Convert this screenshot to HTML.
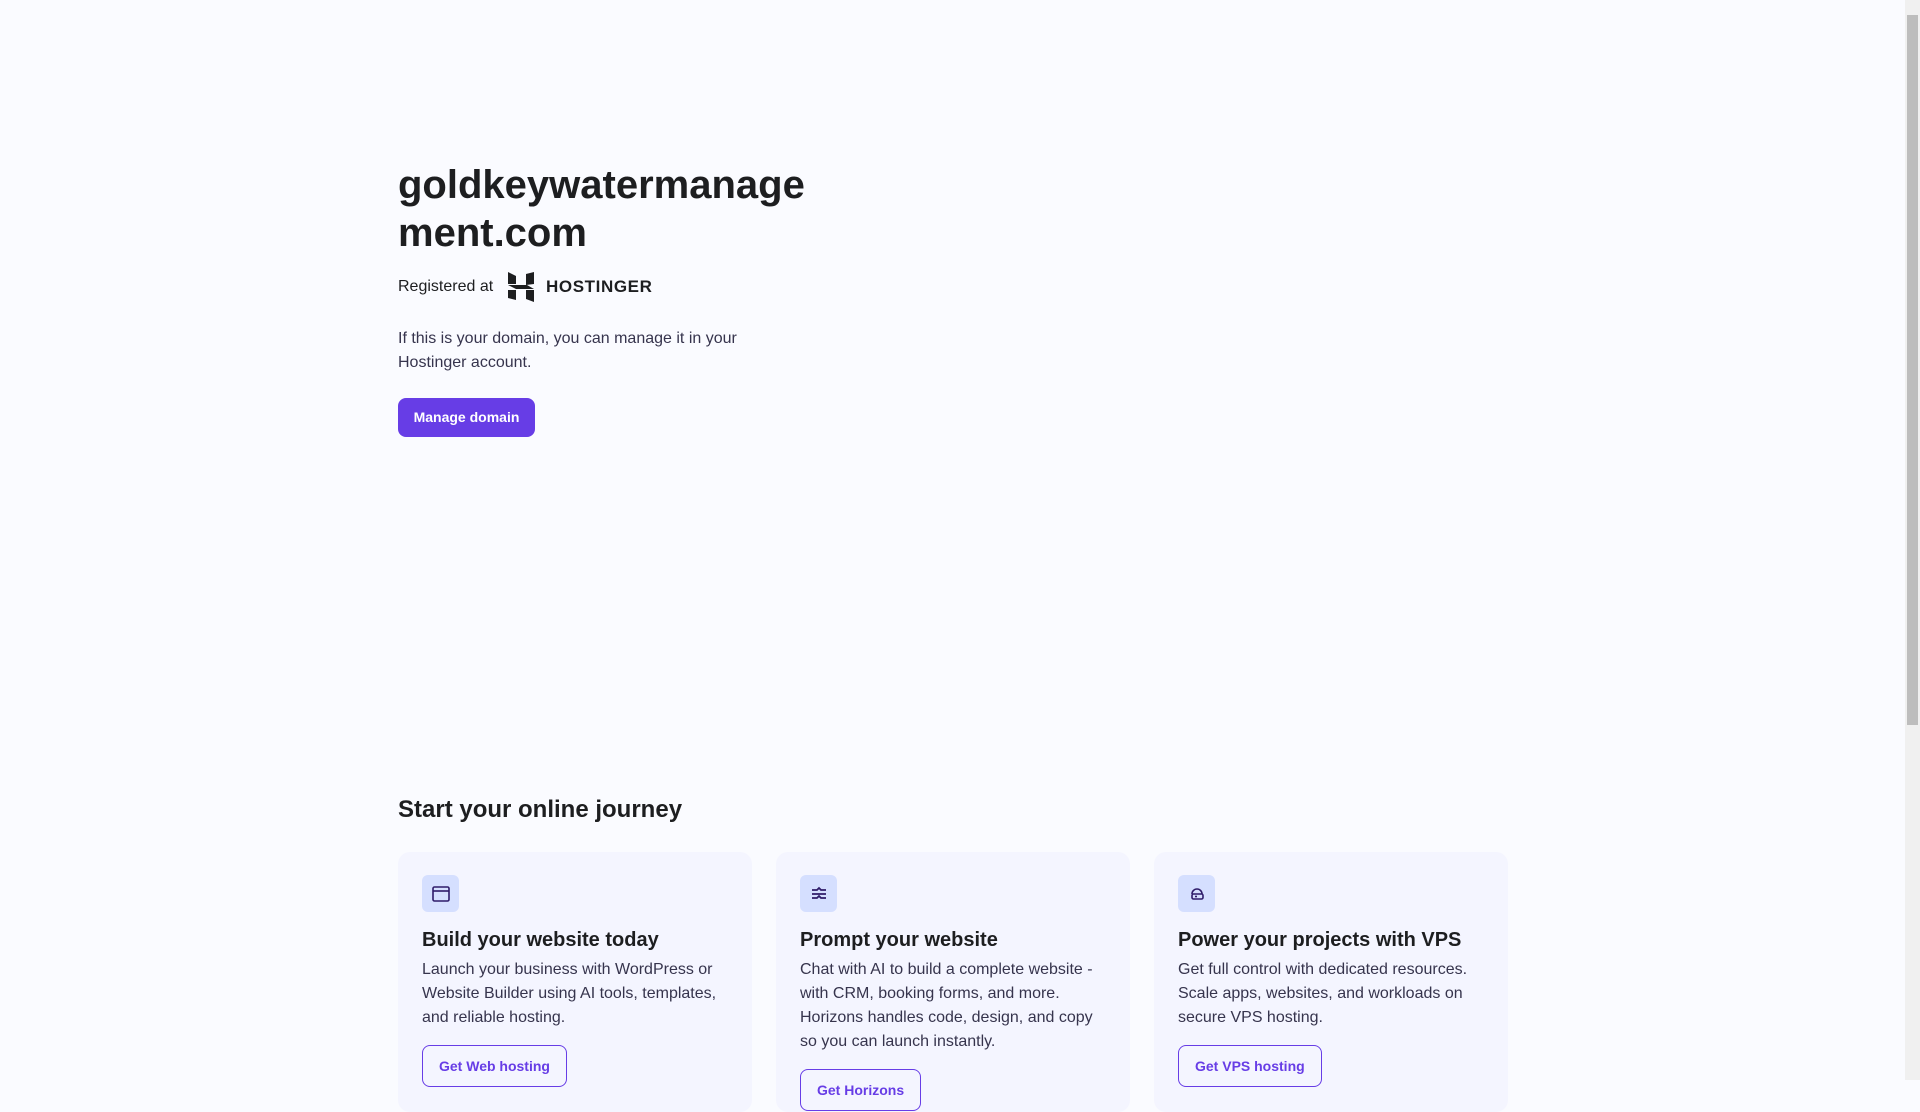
<!DOCTYPE html>
<html><head><meta charset="utf-8"><style>
html,body{margin:0;padding:0}
body{width:1920px;height:1080px;overflow:hidden;background:#fafbff;font-family:"Liberation Sans",sans-serif;color:#1d1e20;position:relative}
.sb{position:absolute;right:0;top:0;width:15px;height:1080px;background:#f0f0f0}
.sb::after{content:"";position:absolute;left:2px;right:2px;top:15px;height:710px;background:#bdbdbd}
h1{position:absolute;left:398px;top:161px;margin:0;font-size:40px;line-height:48px;font-weight:700;width:440px;word-break:break-all}
.reg{position:absolute;left:398px;top:275px;font-size:16px;line-height:24px;display:flex;align-items:center}
.logo{position:absolute;left:508px;top:272px;display:flex;align-items:center}
.logo span{font-weight:700;font-size:17px;letter-spacing:0.6px;margin-left:11px;color:#1d1e20}
.p{position:absolute;left:398px;top:327px;font-size:16px;line-height:24px;width:380px;color:#36344d}
.btn{position:absolute;left:398px;top:398px;width:137px;height:39px;background:#673de6;border-radius:8px;color:#fff;font-weight:700;font-size:14px;line-height:39px;text-align:center}
h2{position:absolute;left:398px;top:795px;margin:0;font-size:24px;line-height:30px;font-weight:700}
.card{position:absolute;top:852px;width:354px;height:260px;background:#f4f5ff;border-radius:12px}
.ic{position:absolute;left:24px;top:23px;width:37px;height:37px;background:#d5dfff;border-radius:6px;display:flex;align-items:center;justify-content:center}
.card h3{position:absolute;left:24px;top:75px;margin:0;font-size:20px;line-height:26px;font-weight:700}
.card p{position:absolute;left:24px;top:106px;margin:0;font-size:16px;line-height:24px;width:310px;color:#36344d}
.ob{position:absolute;left:24px;height:40px;border:1px solid #673de6;border-radius:8px;color:#673de6;font-weight:700;font-size:14px;line-height:40px;padding:0 16px}
</style></head><body>
<div class="sb"></div>
<h1>goldkeywatermanagement.com</h1>
<div class="reg">Registered at</div>
<div class="logo"><svg width="27" height="30" viewBox="0 0 27 30"><g fill="#1d1e20"><polygon points="0,0 8,4 8,12 0,12"/><polygon points="18,2 26,0 26,12 18,13"/><polygon points="0,13 19,13 26,17 8,17"/><polygon points="0,18 8,18 8,28 0,26"/><polygon points="18,18 26,18 26,30 18,27"/></g></svg><span>HOSTINGER</span></div>
<div class="p">If this is your domain, you can manage it in your Hostinger account.</div>
<div class="btn">Manage domain</div>
<h2>Start your online journey</h2>
<div class="card" style="left:398px">
<div class="ic"><svg width="20" height="20" viewBox="0 0 20 20" fill="none" stroke="#2f1c6a" stroke-width="1.6"><rect x="2" y="3" width="16" height="14" rx="1.5"/><line x1="2" y1="7" x2="18" y2="7"/></svg></div>
<h3>Build your website today</h3>
<p>Launch your business with WordPress or Website Builder using AI tools, templates, and reliable hosting.</p>
<div class="ob" style="top:193px">Get Web hosting</div>
</div>
<div class="card" style="left:776px">
<div class="ic"><svg width="20" height="20" viewBox="0 0 20 20" fill="none" stroke="#2f1c6a" stroke-width="1.8"><path d="M3 6h5l2-2 2 2h5M3 10h14M3 14h5l2-2 2 2h5"/></svg></div>
<h3>Prompt your website</h3>
<p>Chat with AI to build a complete website - with CRM, booking forms, and more. Horizons handles code, design, and copy so you can launch instantly.</p>
<div class="ob" style="top:217px">Get Horizons</div>
</div>
<div class="card" style="left:1154px">
<div class="ic"><svg width="20" height="20" viewBox="0 0 20 20" fill="none" stroke="#2f1c6a" stroke-width="1.6"><path d="M5 10a5 5 0 0 1 10 0"/><rect x="5" y="10" width="11" height="5" rx="1.5"/><line x1="8" y1="12.5" x2="10" y2="12.5"/></svg></div>
<h3>Power your projects with VPS</h3>
<p>Get full control with dedicated resources. Scale apps, websites, and workloads on secure VPS hosting.</p>
<div class="ob" style="top:193px">Get VPS hosting</div>
</div>
</body></html>
